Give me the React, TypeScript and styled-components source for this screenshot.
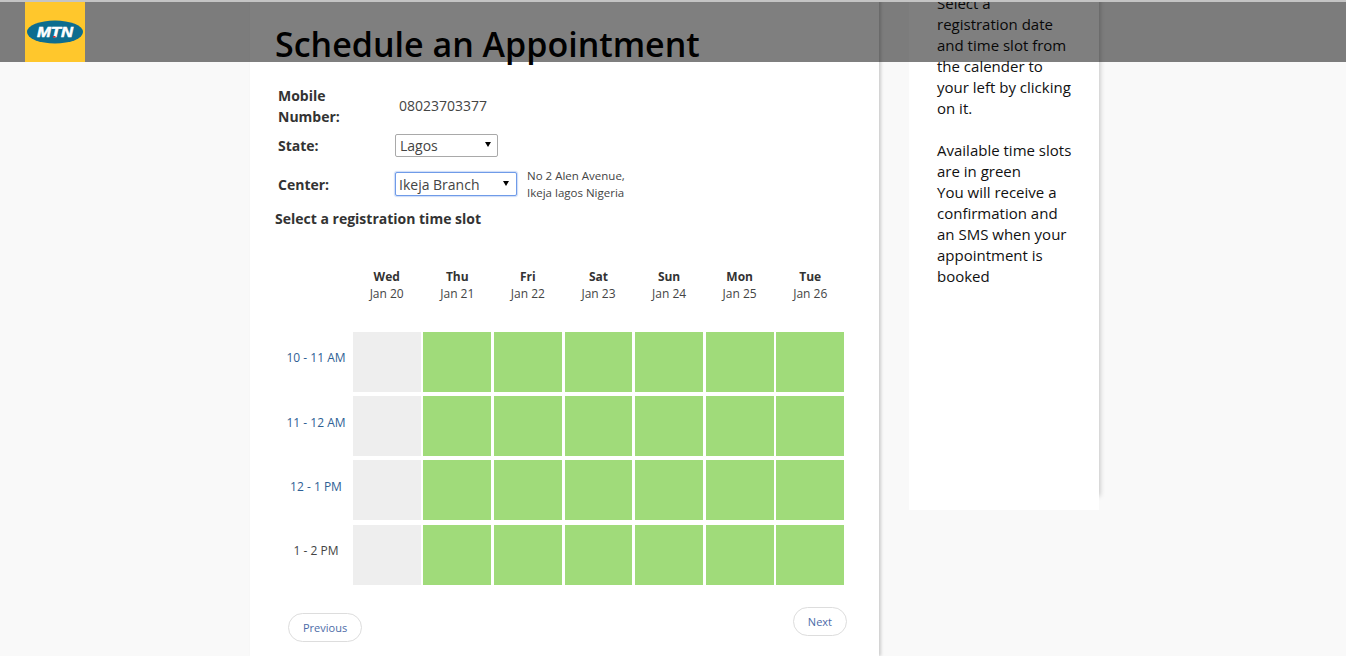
import React from "react";
import styled, { createGlobalStyle } from "styled-components";

const Global = createGlobalStyle`
  html, body { margin: 0; padding: 0; height: 100%; overflow: hidden; background: #f9f9f9; }
  body { font-family: "Open Sans", "Liberation Sans", sans-serif; color: #333; }
  * { box-sizing: border-box; }
`;

const TopBar = styled.header`
  position: fixed;
  top: 0;
  left: 0;
  right: 0;
  height: 62px;
  background: rgba(0, 0, 0, 0.5);
  border-top: 2px solid #c4c4c4;
  padding-left: 25px;
  z-index: 10;
`;

const Logo = styled.svg`
  display: block;
  width: 60px;
  height: 60px;
`;

const Page = styled.div`
  display: flex;
  align-items: flex-start;
  height: 656px;
  padding-left: 250px;
  gap: 30px;
  overflow: hidden;
`;

const Main = styled.main`
  width: 629px;
  height: 656px;
  background: #fff;
  box-shadow: 2px 0 3px rgba(0, 0, 0, 0.18);
  padding: 19px 0 0 25px;
  flex: none;
`;

const Title = styled.h1`
  margin: 0;
  font-size: 34px;
  font-weight: 600;
  line-height: 50px;
  color: #000;
  white-space: nowrap;
`;

const Form = styled.div`
  display: flex;
  flex-direction: column;
  padding: 16px 0 0 3px;
`;

const Row = styled.div<{ $h: number }>`
  display: flex;
  align-items: center;
  height: ${(p) => p.$h}px;
`;

const Label = styled.label`
  width: 117px;
  flex: none;
  font-size: 14px;
  font-weight: 700;
  line-height: 21px;
  color: #333;
`;

const Value = styled.span`
  font-size: 14px;
  color: #444;
  margin: 0 0 2px 4px;
`;

const SelectWrap = styled.div<{ $w: number; $focus?: boolean }>`
  position: relative;
  width: ${(p) => p.$w}px;
  height: ${(p) => (p.$focus ? 24 : 23)}px;
`;

const Select = styled.select<{ $focus?: boolean }>`
  appearance: none;
  width: 100%;
  height: 100%;
  padding: 0 0 0 ${(p) => (p.$focus ? 3 : 4)}px;
  font-family: inherit;
  font-size: 14px;
  color: #444;
  background: #fff;
  border: 1px solid ${(p) => (p.$focus ? "#6f9be8" : "#a9a9a9")};
  border-radius: 2px;
  box-shadow: ${(p) => (p.$focus ? "0 0 1px 1px rgba(111,155,232,.35)" : "none")};
  outline: none;
`;

const Caret = styled.svg<{ $focus?: boolean }>`
  position: absolute;
  right: ${(p) => (p.$focus ? 8 : 7)}px;
  top: ${(p) => (p.$focus ? 9 : 8)}px;
  width: 6px;
  height: 5px;
`;

const Address = styled.div`
  margin-left: 10px;
  font-size: 11.5px;
  line-height: 17px;
  color: #444;
`;

const Subtitle = styled.h2`
  margin: 5px 0 0;
  font-size: 14px;
  font-weight: 700;
  line-height: 20px;
  color: #333;
`;

const Schedule = styled.div`
  display: grid;
  grid-template-columns: 75px repeat(7, 67.8px);
  column-gap: 2.8px;
  grid-template-rows: 59.5px 60px 60px 60px 60px;
  row-gap: 4.33px;
  margin-top: 39px;
`;

const Spacer = styled.div``;

const Day = styled.div`
  text-align: center;
  font-size: 12px;
  line-height: 17px;
  color: #444;
  b { display: block; color: #333; }
`;

const Time = styled.div<{ $blue?: boolean }>`
  display: flex;
  align-items: center;
  justify-content: center;
  font-size: 12px;
  color: ${(p) => (p.$blue ? "#2f5f95" : "#444")};
  padding: 0 0 8px 7px;
  white-space: nowrap;
`;

const Cell = styled.div<{ $open: boolean }>`
  background: ${(p) => (p.$open ? "#a0db7a" : "#eeeeee")};
`;

const Pager = styled.div`
  display: flex;
  justify-content: space-between;
  align-items: flex-start;
  width: 559px;
  margin: 22px 0 0 13px;
`;

const PillButton = styled.a<{ $down?: boolean }>`
  display: flex;
  align-items: center;
  justify-content: center;
  height: 29px;
  padding: 0 14px;
  border: 1px solid #ddd;
  border-radius: 15px;
  background: #fff;
  font-size: 11px;
  color: #4c6ba8;
  margin-top: ${(p) => (p.$down ? 6 : 0)}px;
`;

const Aside = styled.aside`
  width: 190px;
  height: 510px;
  flex: none;
  background: #fff;
  box-shadow: 4px -11px 5px -3px rgba(0, 0, 0, 0.22);
  padding: 0 0 0 28px;
  font-size: 15px;
  line-height: 21px;
  color: #111;
  overflow: hidden;
  white-space: nowrap;
  p { margin: 0; }
  p:first-child { margin-top: -7px; }
`;

const days = [
  ["Wed", "Jan 20"], ["Thu", "Jan 21"], ["Fri", "Jan 22"], ["Sat", "Jan 23"],
  ["Sun", "Jan 24"], ["Mon", "Jan 25"], ["Tue", "Jan 26"],
];
const slots: [string, boolean][] = [
  ["10 - 11 AM", true], ["11 - 12 AM", true], ["12 - 1 PM", true], ["1 - 2 PM", false],
];

export default function App() {
  return (
    <>
      <Global />
      <TopBar>
        <Logo viewBox="0 0 60 60" role="img" aria-label="MTN">
          <rect width="60" height="60" fill="#ffc72c" />
          <ellipse cx="30" cy="30" rx="28" ry="11.5" fill="#0d6d8f" />
          <text x="30" y="35" textAnchor="middle" fontFamily="Liberation Sans, sans-serif" fontSize="14" fontWeight="700" fontStyle="italic" fill="#fff" stroke="#fff" strokeWidth="0.5" textLength="36" lengthAdjust="spacingAndGlyphs">MTN</text>
          <rect x="28" y="34" width="2.5" height="1.6" fill="#d8262c" />
        </Logo>
      </TopBar>
      <Page>
        <Main>
          <Title>Schedule an Appointment</Title>
          <Form>
            <Row $h={42}>
              <Label>Mobile<br />Number:</Label>
              <Value>08023703377</Value>
            </Row>
            <Row $h={37}>
              <Label>State:</Label>
              <SelectWrap $w={103}>
                <Select defaultValue="Lagos"><option>Lagos</option></Select>
                <Caret viewBox="0 0 6 5"><path d="M0 0h6L3 5z" fill="#000" /></Caret>
              </SelectWrap>
            </Row>
            <Row $h={40}>
              <Label>Center:</Label>
              <SelectWrap $w={122} $focus>
                <Select $focus defaultValue="Ikeja Branch"><option>Ikeja Branch</option></Select>
                <Caret $focus viewBox="0 0 6 5"><path d="M0 0h6L3 5z" fill="#000" /></Caret>
              </SelectWrap>
              <Address>No 2 Alen Avenue,<br />Ikeja lagos Nigeria</Address>
            </Row>
          </Form>
          <Subtitle>Select a registration time slot</Subtitle>
          <Schedule>
            <Spacer />
            {days.map(([d, date]) => (
              <Day key={d}><b>{d}</b>{date}</Day>
            ))}
            {slots.map(([label, blue]) => (
              <React.Fragment key={label}>
                <Time $blue={blue}>{label}</Time>
                {days.map(([d], i) => <Cell key={d} $open={i > 0} />)}
              </React.Fragment>
            ))}
          </Schedule>
          <Pager>
            <PillButton $down>Previous</PillButton>
            <PillButton>Next</PillButton>
          </Pager>
        </Main>
        <Aside>
          <p>Select a<br />registration date<br />and time slot from<br />the calender to<br />your left by clicking<br />on it.</p>
          <br />
          <p>Available time slots<br />are in green</p>
          <p>You will receive a<br />confirmation and<br />an SMS when your<br />appointment is<br />booked</p>
        </Aside>
      </Page>
    </>
  );
}
